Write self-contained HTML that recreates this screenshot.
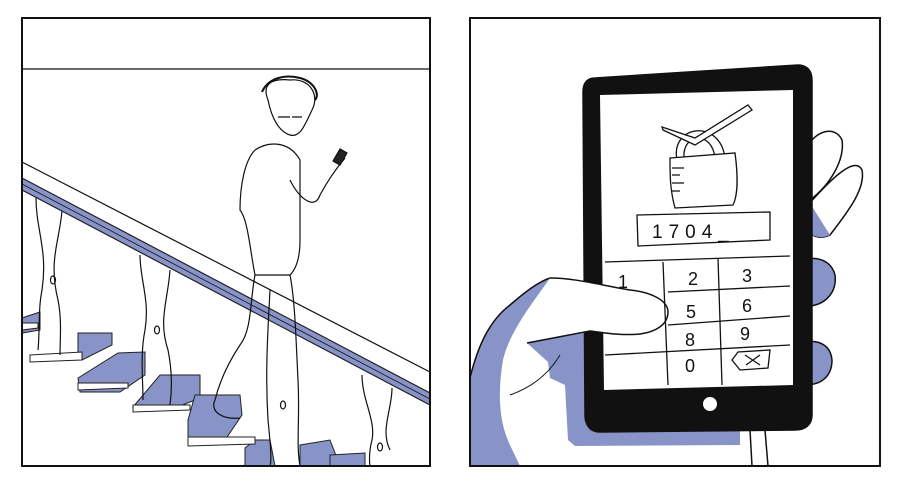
<!DOCTYPE html>
<html><head><meta charset="utf-8"><style>
html,body{margin:0;padding:0;background:#fff;width:900px;height:490px;overflow:hidden}
svg{display:block}
text{font-family:"Liberation Sans",sans-serif}
</style></head><body>
<svg width="900" height="490" viewBox="0 0 900 490" xmlns="http://www.w3.org/2000/svg">
<rect width="900" height="490" fill="#fff"/>
<!-- LEFT PANEL -->
<g stroke="#111" fill="none" stroke-width="1.2">
<g fill="#8893c8" stroke="#222" stroke-width="1">
<polygon points="22,318 40,312 40,330 22,333"/>
<polygon points="78,333 112,333 112,345 82,360 78,355"/>
<polygon points="78,378 118,353 145,352 145,375 120,392 80,392"/>
<polygon points="133,407 160,375 200,375 200,398 170,410"/>
<polygon points="188,420 195,395 240,395 242,415 225,440 188,445"/>
<polygon points="245,448 255,440 270,440 275,466 245,466"/>
<polygon points="300,445 330,440 340,466 300,466"/>
<polygon points="330,455 365,453 365,466 330,466"/>
</g>
<g fill="#fff" stroke="#222" stroke-width="1">
<polygon points="22,323 38,323 38,328 22,330"/>
<polygon points="30,355 82,352 82,360 30,362"/>
<polygon points="78,383 128,383 128,388 78,390"/>
<polygon points="133,405 190,405 190,410 133,412"/>
<polygon points="188,437 255,437 255,444 188,446"/>
</g>
<path d="M36,198 C36,230 48,250 42,290 C38,310 40,330 38,350 M62,210 C60,240 48,260 58,300 C62,320 60,340 60,355"/>
<path d="M140,255 C140,280 150,300 145,330 C140,355 143,380 143,400 M170,270 C168,300 158,320 168,350 C172,370 172,390 170,405"/>
<path d="M362,375 C362,400 376,420 372,440 C368,455 370,466 370,466 M392,388 C392,410 380,430 390,450"/>
<ellipse cx="53" cy="280" rx="2.5" ry="4"/><ellipse cx="157" cy="330" rx="2.5" ry="4"/><ellipse cx="283" cy="405" rx="2.5" ry="4"/><ellipse cx="380" cy="447" rx="2.5" ry="4"/>
<polygon points="22,178 430,393 430,405 22,190" fill="#8893c8" stroke="#222"/>
<line x1="22" y1="162" x2="430" y2="372"/>
<line x1="22" y1="184" x2="430" y2="399" stroke-width="0.8"/>
<!-- person -->
<path d="M268,100 C262,85 270,78 290,80 C310,78 320,95 312,110 C305,125 300,138 290,135 C280,132 272,120 268,100 Z" fill="#fff"/>
<path d="M262,92 C268,78 285,74 300,78 C315,82 320,95 315,100" stroke-width="2"/>
<path d="M255,150 C270,140 290,142 300,160 C300,180 300,200 300,240 C300,260 295,270 290,275 L255,275 C250,250 248,220 240,210 C240,185 245,160 255,150 Z" fill="#fff"/>
<path d="M255,275 C250,300 252,330 240,345 C230,360 220,380 215,400 C210,410 220,420 240,418 M290,275 C295,300 296,340 298,380 C300,420 296,445 300,466 M270,290 C268,330 265,370 268,420 C270,440 272,460 270,466"/>
<path d="M290,180 C300,200 315,210 320,195 C328,180 335,170 345,158"/>
<rect x="336" y="150" width="8" height="14" fill="#222" transform="rotate(30 340 157)"/>
<path d="M278,117 h12 M292,117 h10"/>
</g>
<line x1="22" y1="69" x2="430" y2="69" stroke="#111" stroke-width="1.2"/>
<rect x="22" y="18" width="408" height="448" fill="none" stroke="#111" stroke-width="2"/>

<!-- RIGHT PANEL -->
<g stroke="#111" stroke-width="1.5">
<!-- hand base white -->
<path d="M470,378 C478,345 490,320 510,305 C525,292 538,282 550,278 C570,276 590,280 600,282 L600,440 L700,466 L470,466 Z" fill="#fff" stroke="none"/>
<!-- blue band outer edge -->
<path d="M470,378 C478,345 490,320 510,305 C525,292 538,282 550,278 C535,300 510,330 503,360 C498,390 498,420 510,445 L520,466 L470,466 Z" fill="#8893c8" stroke="none"/>
<!-- blue under thumb -->
<path d="M527,343 L590,332 L598,400 L610,428 L740,428 L740,445 L575,446 L568,440 L565,385 L550,378 L548,362 Z" fill="#8893c8" stroke="none"/>
<path d="M470,378 C478,345 490,320 510,305 C525,292 538,282 550,278" fill="none"/>
<path d="M510,395 C530,388 548,375 560,355" fill="none" stroke-width="1"/>
<!-- right fingers -->
<path d="M805,150 C815,130 835,125 842,140 C845,160 830,185 810,200 Z" fill="#fff"/>
<path d="M808,205 C830,180 855,155 862,170 C866,190 845,215 830,235 C820,240 808,235 808,230 Z" fill="#fff"/>
<path d="M808,200 L830,235 C820,240 808,235 808,230 Z" fill="#8893c8" stroke="none"/>
<path d="M795,265 C805,255 830,255 835,275 C838,295 820,310 800,305 Z" fill="#8893c8"/>
<path d="M795,345 C810,338 830,340 832,360 C832,380 815,388 800,383 Z" fill="#8893c8"/>
<!-- phone -->
<path d="M595,78 L798,65 C808,65 812,72 812,80 L812,415 C812,425 805,430 795,430 L600,432 C590,432 585,425 585,415 L583,92 C583,82 588,78 595,78 Z" fill="#111"/>
<path d="M600,95 L793,90 L793,385 L604,390 Z" fill="#fff" stroke="none"/>
<circle cx="710" cy="404" r="7" fill="#fff" stroke="none"/>
<path d="M750,430 L752,466 M765,430 L768,466" fill="none"/>
<!-- thumb -->
<path d="M550,278 C575,278 600,285 630,290 C650,292 668,300 668,312 C668,325 655,332 640,334 C620,336 600,332 590,331 L527,343" fill="#fff"/>
</g>
<g fill="none" stroke="#111" stroke-width="1.3">
<path d="M677,160 C670,125 720,118 725,158"/><path d="M684,158 C682,133 712,130 715,158"/>
<path d="M670,158 L735,153 C738,175 738,195 733,205 L675,208 C670,190 670,175 670,158 Z" fill="#fff"/>
<path d="M672,168 h12 M672,175 h8 M672,183 h12 M672,191 h8"/>
<path d="M662,127 L695,138 L748,105 L752,110 L695,145 L663,130 Z" fill="#fff"/>
<path d="M637,215 L770,212 L770,240 L638,246 Z"/>
<path d="M605,262 L790,256 M668,292 L790,286 M668,325 L790,316 M605,355 L790,345 M663,262 L668,385 M718,258 L722,385"/>
<path d="M732,360 L738,352 L770,350 L768,368 L740,370 Z M745,355 L760,365 M760,355 L746,365"/>
</g>
<g font-size="18" fill="#111">
<text x="652" y="238" font-size="19" letter-spacing="6">1704_</text>
<text x="688" y="285">2</text><text x="742" y="282">3</text>
<text x="686" y="318">5</text><text x="742" y="312">6</text>
<text x="685" y="346">8</text><text x="740" y="340">9</text>
<text x="685" y="372">0</text>
<text x="618" y="288">1</text>
</g>
<rect x="470" y="18" width="410" height="448" fill="none" stroke="#111" stroke-width="2"/>
</svg>
</body></html>
